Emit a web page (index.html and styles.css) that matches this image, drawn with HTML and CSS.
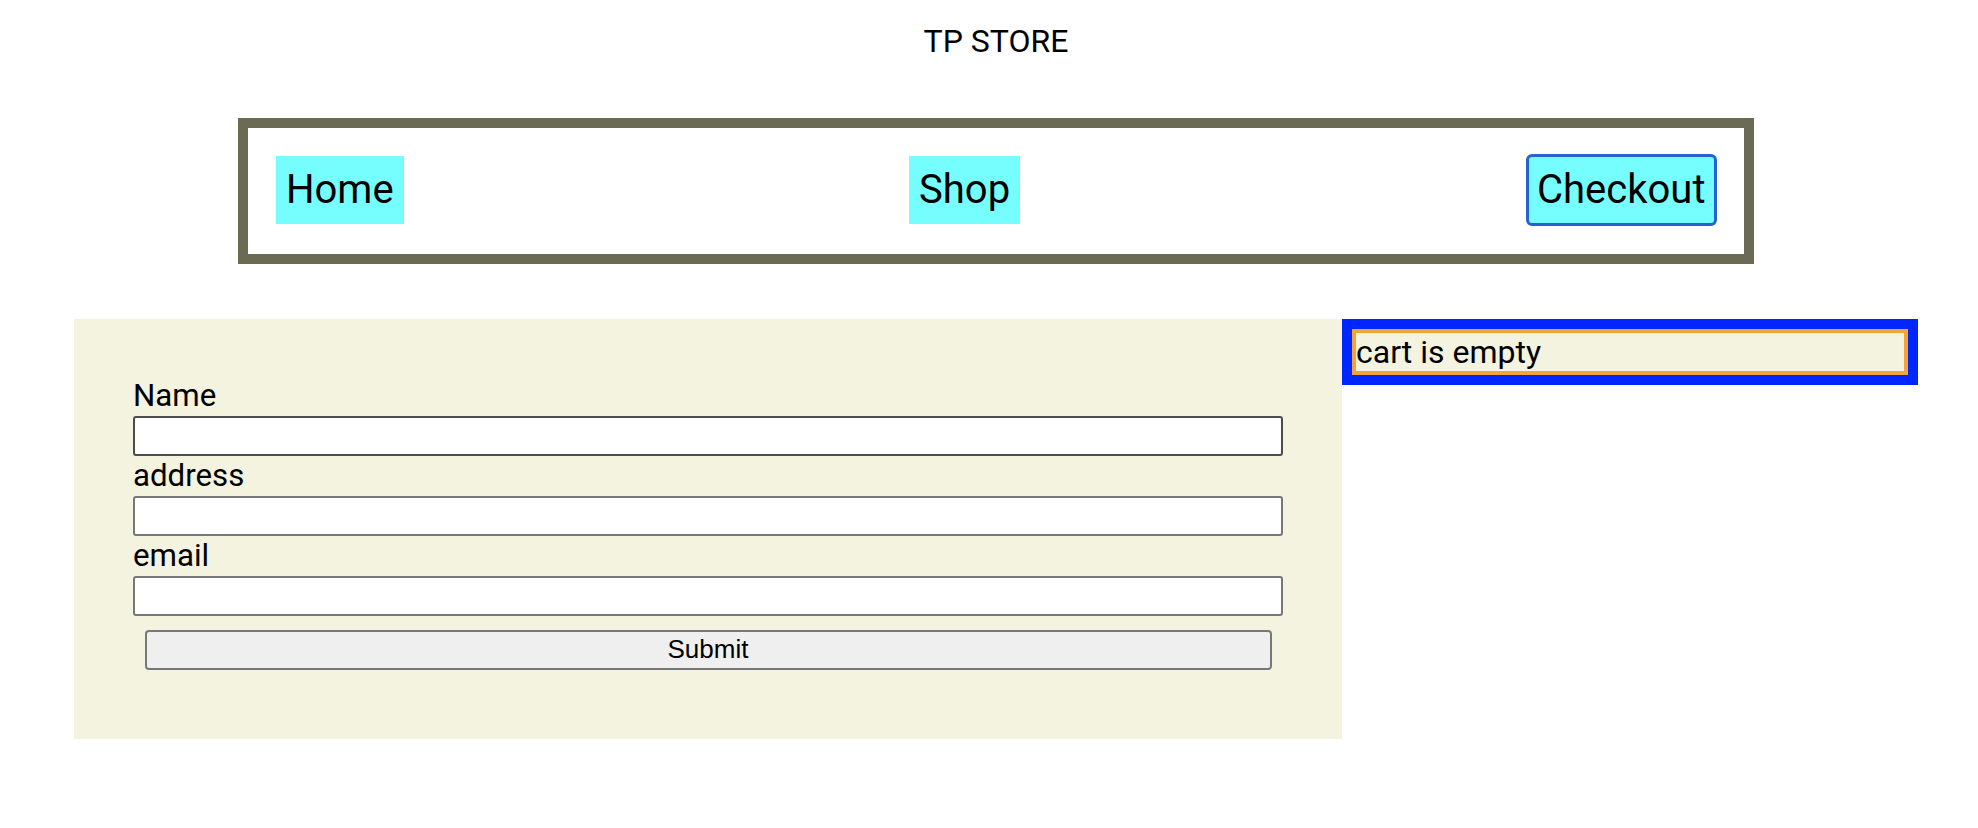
FILE: index.html
```html
<!DOCTYPE html>
<html lang="en">
<head>
<meta charset="utf-8">
<title>TP STORE</title>
<link rel="stylesheet" href="styles.css">
</head>
<body>
<div class="top">
  <div class="title">TP STORE</div>
  <nav class="nav">
    <a class="nav-link" href="#">Home</a>
    <a class="nav-link" href="#">Shop</a>
    <button class="nav-btn" type="button">Checkout</button>
  </nav>
</div>
<main class="main">
  <section class="panel">
    <form class="form">
      <label class="label" for="name">Name</label>
      <input class="field field-hover" id="name" type="text">
      <label class="label" for="address">address</label>
      <input class="field" id="address" type="text">
      <label class="label" for="email">email</label>
      <input class="field" id="email" type="text">
      <button class="submit" type="button">Submit</button>
    </form>
  </section>
  <aside class="cart">
    <div class="cart-inner">cart is empty</div>
  </aside>
</main>
</body>
</html>
```
FILE: styles.css
```css
html, body {
  margin: 0;
  padding: 0;
  background: #ffffff;
  font-family: Roboto, "Liberation Sans", Arial, sans-serif;
  color: #000000;
}

.top {
  margin-left: 238px;
  width: 1516px;
  padding-top: 23px;
}

.title {
  text-align: center;
  font-size: 32px;
  line-height: 36.6px;
}

.nav {
  margin-top: 58px;
  box-sizing: border-box;
  height: 146px;
  border: 10px solid #6b6a55;
  padding: 26px 27px 28px 28px;
  display: flex;
  justify-content: space-between;
  align-items: center;
}

.nav-link {
  display: block;
  background: #76fefe;
  color: #000000;
  text-decoration: none;
  font-size: 40px;
  line-height: 47px;
  padding: 10.5px 10px;
}

.nav-btn {
  display: block;
  background: #76fefe;
  color: #000000;
  font-family: Roboto, "Liberation Sans", Arial, sans-serif;
  font-size: 40px;
  line-height: 47px;
  padding: 9.5px 8.5px;
  border: 3px solid #2463d0;
  border-radius: 6px;
  margin: 0;
}

.main {
  display: flex;
  align-items: flex-start;
  margin-top: 55px;
  padding-left: 74px;
}

.panel {
  width: 1268px;
  height: 420px;
  box-sizing: border-box;
  background: #f4f3df;
  padding: 57px 59px 0 59px;
}

.form {
  display: flex;
  flex-direction: column;
}

.label {
  display: block;
  font-size: 31.25px;
  line-height: 40px;
  height: 40px;
}

.field {
  display: block;
  box-sizing: border-box;
  width: 100%;
  height: 40px;
  margin: 0;
  background: #ffffff;
  border: 2px solid #777777;
  border-radius: 3px;
}

.field-hover {
  border-color: #4d4d4d;
}

.submit {
  display: block;
  box-sizing: border-box;
  width: 98%;
  height: 40px;
  margin: 14px auto 0;
  background: #efefef;
  border: 2px solid #777777;
  border-radius: 4px;
  font-family: "Liberation Sans", Arial, sans-serif;
  font-size: 26px;
  color: #000000;
  padding: 0;
}

.cart {
  width: 576px;
  box-sizing: border-box;
  background: #0026ff;
  padding: 10px;
}

.cart-inner {
  border: 4px solid #f2a33a;
  background: #f4f3df;
  font-size: 32px;
  line-height: 38px;
  height: 38px;
  overflow: hidden;
}
```
